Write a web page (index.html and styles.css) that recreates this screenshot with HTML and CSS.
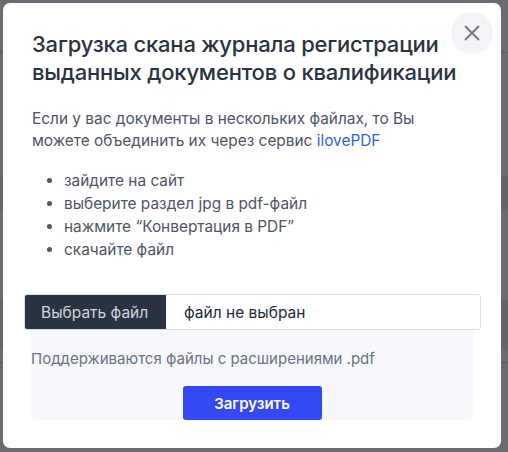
FILE: index.html
```html
<!DOCTYPE html>
<html lang="ru">
<head>
<meta charset="utf-8">
<link rel="stylesheet" href="styles.css">
</head>
<body>
<div class="page">
  <div class="bg-line l1"></div>
  <div class="bg-band b1"></div>
  <div class="bg-line l2"></div>
  <div class="bg-band b2"></div>
</div>
<div class="overlay">
  <div class="modal">
    <button class="close" aria-label="Закрыть">
      <svg width="16" height="16" viewBox="0 0 16 16"><path d="M1.5 1.5L14.5 14.5M14.5 1.5L1.5 14.5" stroke="#6f737b" stroke-width="1.8" stroke-linecap="round"/></svg>
    </button>
    <h2 class="title">Загрузка скана журнала регистрации выданных документов о квалификации</h2>
    <p class="intro">Если у вас документы в нескольких файлах, то Вы можете объединить их через сервис <a href="#" class="link">ilovePDF</a></p>
    <ul class="steps">
      <li>зайдите на сайт</li>
      <li>выберите раздел jpg в pdf-файл</li>
      <li>нажмите “Конвертация в PDF”</li>
      <li>скачайте файл</li>
    </ul>
    <div class="file-input">
      <span class="file-btn">Выбрать файл</span>
      <span class="file-name">файл не выбран</span>
    </div>
    <div class="upload-box">
      <p class="hint">Поддерживаются файлы с расширениями .pdf</p>
      <button class="submit">Загрузить</button>
    </div>
  </div>
</div>
</body>
</html>
```
FILE: styles.css
```css
* { box-sizing: border-box; }
html, body { margin: 0; padding: 0; }
body {
  width: 508px;
  height: 452px;
  background: #6b6c71;
  font-family: Inter, "Noto Sans", sans-serif;
  overflow: hidden;
  position: relative;
}
.page { position: absolute; inset: 0; }
.bg-line { position: absolute; left: 0; right: 0; height: 1px; background: #5a5b60; }
.l1 { top: 52px; }
.l2 { top: 362px; }
.bg-band { position: absolute; left: 0; right: 0; background: #646569; }
.b1 { top: 176px; height: 34px; }
.b2 { top: 300px; height: 50px; }
.overlay {
  position: absolute;
  inset: 0;
  padding: 3px 7px 4px 3px;
}
.modal {
  position: relative;
  background: #fff;
  border-radius: 7px;
  height: 445px;
  padding: 27px 40px 0 29px;
}
.close {
  position: absolute;
  top: 9px;
  right: 8px;
  width: 42px;
  height: 42px;
  border: none;
  border-radius: 50%;
  background: #f3f4f8;
  display: flex;
  align-items: center;
  justify-content: center;
  padding: 0;
}
.title {
  margin: 0;
  font-size: 22px;
  line-height: 28px;
  font-weight: 500;
  color: #2a3342;
  letter-spacing: -0.2px;
}
.intro {
  margin: 22px 0 0;
  font-size: 15.4px;
  line-height: 22px;
  color: #4d5566;
}
.link { color: #2f5fe8; text-decoration: none; }
.steps {
  margin: 17px 0 0;
  padding-left: 32px;
  font-size: 15.4px;
  line-height: 23px;
  color: #4d5566;
}
.file-input {
  display: flex;
  margin: 33px -20px 0 -8px;
  height: 36px;
  border: 1px solid #d5dde9;
  border-radius: 3px;
  overflow: hidden;
}
.file-btn {
  background: #2a3342;
  color: #d0d5dd;
  font-size: 15.5px;
  display: flex;
  align-items: center;
  padding: 0 16px 0 16px;
  width: 141px;
}
.file-name {
  display: flex;
  align-items: center;
  padding-left: 18px;
  font-size: 15.5px;
  color: #222a36;
}
.upload-box {
  margin: 0 0 0 -1px;
  width: 442px;
  background: #f6f8fb;
  border-radius: 0 0 6px 6px;
  padding: 18px 0 0 0;
  display: flex;
  flex-direction: column;
  align-items: center;
  height: 90px;
}
.hint {
  align-self: flex-start;
  margin: 0;
  font-size: 15px;
  line-height: 22px;
  color: #6b7384;
}
.submit {
  margin-top: 16px;
  width: 139px;
  height: 34px;
  border: none;
  border-radius: 3px;
  background: #3448f4;
  color: #fff;
  font-family: Inter, "Noto Sans", sans-serif;
  font-size: 15px;
  font-weight: 600;
}
```
